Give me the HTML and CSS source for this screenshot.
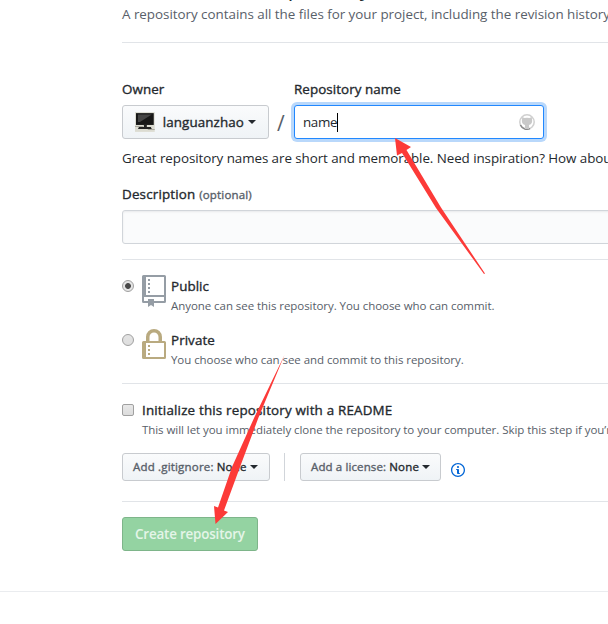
FILE: index.html
```
<!DOCTYPE html>
<html lang="en">
<head>
<meta charset="utf-8">
<title>Create a new repository</title>
<link rel="stylesheet" href="styles.css">
</head>
<body>
<main class="page">
  <header class="intro">
    <h1>Create a new repository</h1>
    <p>A repository contains all the files for your project, including the revision history.</p>
  </header>

  <section class="naming">
    <div class="name-row">
      <div class="field">
        <label class="tight">Owner</label>
        <button class="btn owner">
          <svg class="avatar" viewBox="0 0 20 20"><rect width="20" height="20" fill="#dcdcd2"/><path d="M1 1h18v12H1z" fill="#171717"/><path d="M3 2.5h14L5 10H3z" fill="#454545"/><path d="M9 13h3v2H9zM4 15h12l1 2H3z" fill="#222"/><path d="M0 14h8v1H0zM13 17h7v1h-7z" fill="#aaa99f"/></svg>
          <span>languanzhao</span><i class="caret"></i>
        </button>
      </div>
      <span class="slash">/</span>
      <div class="field">
        <label class="tight">Repository name</label>
        <div class="input focused"><span>name</span><i class="cursor"></i>
          <svg class="loader" viewBox="0 0 16 16"><circle cx="8" cy="8" r="7.2" fill="none" stroke="#d0d0d0" stroke-width="1.5"/><path d="M1.400 11A7.200 7.200 0 0 0 11 14.500" fill="none" stroke="#888" stroke-width="1.5"/><path d="M3.300 3.100l2.200 1q2.500-.6 5 0l2.200-1 .3 2.200q1 4.600-3 5.700l.2 4.100H5.800l.2-4.100q-4-1.100-3-5.700z" fill="#c9c9c9"/></svg>
        </div>
      </div>
    </div>
    <p class="hint">Great repository names are short and memorable. Need inspiration? How about</p>
    <label>Description <small>(optional)</small></label>
    <div class="input description"></div>
  </section>

  <section class="visibility">
    <div class="choice">
      <i class="radio checked"></i>
      <svg class="icon" viewBox="0 0 24 32" fill="#959da5"><path fill-rule="evenodd" d="M1.500 0h21A1.500 1.500 0 0 1 24 1.500v25a1.500 1.500 0 0 1-1.500 1.500H12v4l-3-2-3 2v-4H1.500A1.500 1.500 0 0 1 0 26.500v-25A1.500 1.500 0 0 1 1.500 0zM4 2v18h18V2zM2 22v4h4v-2h6v2h10v-4z"/><path d="M6 4h2v2H6zM6 8h2v2H6zM6 12h2v2H6zM6 16h2v2H6z"/></svg>
      <div class="copy"><b class="tight">Public</b><p>Anyone can see this repository. You choose who can commit.</p></div>
    </div>
    <div class="choice">
      <i class="radio"></i>
      <svg class="icon" viewBox="0 0 24 32" fill="#b9aa80"><path fill-rule="evenodd" d="M1.500 12H4V8a8 8 0 0 1 16 0v4h2.500a1.500 1.500 0 0 1 1.500 1.500v15a1.500 1.500 0 0 1-1.500 1.500h-21A1.500 1.500 0 0 1 0 28.500v-15A1.500 1.500 0 0 1 1.500 12zM7.500 12h9V8a4.500 4.500 0 0 0-9 0zM4 14v14h18V14z"/><path d="M6 16h2v2H6zM6 20h2v2H6zM6 24h2v2H6z"/></svg>
      <div class="copy"><b class="tight">Private</b><p>You choose who can see and commit to this repository.</p></div>
    </div>
  </section>

  <section class="initialize">
    <div class="choice">
      <i class="checkbox"></i>
      <div class="copy"><b>Initialize this repository with a README</b><p>This will let you immediately clone the repository to your computer. Skip this step if you’re</p></div>
    </div>
    <div class="menus">
      <button class="btn small ignore"><span>Add .gitignore: <b>None</b></span><i class="caret"></i></button>
      <i class="divider"></i>
      <button class="btn small license"><span>Add a license: <b>None</b></span><i class="caret"></i></button>
      <svg class="info" viewBox="0 0 14 16"><path fill="#0366d6" fill-rule="evenodd" d="M6.300 5.690a.942.942 0 0 1-.28-.7c0-.28.09-.52.28-.7.190-.18.420-.28.7-.28.280 0 .520.090.7.280.180.190.280.420.280.7 0 .280-.09.520-.28.7a1 1 0 0 1-.7.300c-.28 0-.52-.11-.7-.300zM8 7.990c-.02-.25-.11-.48-.31-.69-.2-.19-.42-.3-.69-.31H6c-.27.020-.48.130-.69.310-.2.200-.3.440-.31.690h1v3c.020.270.110.500.310.690.200.200.420.310.690.310h1c.270 0 .480-.11.690-.31.200-.19.300-.42.310-.69H8V7.980v.010zM7 2.300c-3.140 0-5.700 2.540-5.700 5.680 0 3.140 2.560 5.700 5.700 5.700s5.700-2.550 5.700-5.700c0-3.150-2.560-5.690-5.700-5.690v.010zM7 .980c3.860 0 7 3.140 7 7s-3.140 7-7 7-7-3.120-7-7 3.140-7 7-7z"/></svg>
    </div>
  </section>

  <button class="btn create"><span>Create repository</span></button>
</main>
<footer class="footer"></footer>
<svg class="arrows" viewBox="0 0 608 624" fill="#fc3a38"><path d="M395 138l16 9-4.500 3L441 207.500l44 66-1 .5-48-66-34-55-5 2.500z"/><path d="M284.500 355L258.500 417.500 240 467 224 510.500l4 1.500-12.500 12L214 506l4 1.500L232 467l22.500-50z"/></svg>
</body>
</html>
```
FILE: styles.css
```
* { box-sizing: border-box; }
body {
  margin: 0;
  height: 624px;
  overflow: hidden;
  position: relative;
  background: #fff;
  color: #24292e;
  font: 13.4px/20px "Open Sans", "Noto Sans", sans-serif;
}
h1, p { margin: 0; white-space: nowrap; }
b, label, .btn { font-weight: 400; letter-spacing: .18px; -webkit-text-stroke: .35px; }
label { display: block; white-space: nowrap; height: 20px; }
.tight { letter-spacing: .07px; }
.page { width: 490px; margin-left: 118px; padding-left: 4px; overflow: hidden; }
.intro { height: 43px; border-bottom: 1px solid #e1e4e8; color: #586069; padding-top: 4px; letter-spacing: -.025px; }
h1 { font-size: 22px; font-weight: 400; line-height: 30px; margin-top: -32px; padding-bottom: 2px; letter-spacing: -.1px; word-spacing: 2px; color: #24292e; }
.naming { height: 217px; padding-top: 36px; border-bottom: 1px solid #e1e4e8; }
.name-row { display: flex; }
.field label { margin-bottom: 6px; }
.btn {
  display: flex;
  align-items: center;
  border: 1px solid #c8cbcf;
  border-radius: 3px;
  background: linear-gradient(#fafbfc, #eff3f6);
  color: #24292e;
  font-family: "Open Sans", "Noto Sans", sans-serif;
  font-size: 13.4px;
  line-height: 20px;
  white-space: nowrap;
  padding: 0 12px;
}
.owner { width: 147px; height: 34px; letter-spacing: .1px; }
.avatar { width: 20px; height: 20px; margin-right: 8px; }
.caret { border: 4px solid transparent; border-top-color: currentColor; border-bottom: 0; margin-left: 4px; }
.slash { width: 25px; padding: 32px 0 0 8px; font-size: 21px; line-height: 24px; color: #586069; }
.input { height: 34px; border: 1px solid #d1d5da; border-radius: 3px; background: #fafbfc; box-shadow: inset 0 1px 2px rgba(27,31,35,.075); }
.focused { width: 250px; display: flex; align-items: center; padding: 0 8px; background: #fff; border-color: #2188ff; box-shadow: 0 0 0 3px #b9d8fb; letter-spacing: -.35px; }
.cursor { width: 1px; height: 19px; background: #000; }
.loader { width: 16px; height: 16px; margin-left: auto; }
.hint { margin: 9px 0 16px; letter-spacing: -.075px; }
label + .description { margin-top: 6px; }
small { font-size: 11.500px; color: #586069; }
.description { width: 700px; }
.visibility { height: 124px; padding-top: 16px; border-bottom: 1px solid #e1e4e8; }
.choice { display: flex; height: 54px; }
.radio { flex: none; width: 12px; height: 12px; border: 1px solid #a0a0a0; border-radius: 50%; margin: 4px 8px 0 0; background: linear-gradient(#e4e4e4, #dedede); }
.checked { background: radial-gradient(circle, #484848 0 2.500px, #e4e4e4 3.300px); }
.icon { flex: none; width: 24px; height: 32px; margin: -1px 5px 0 0; }
.copy b { display: block; height: 20px; white-space: nowrap; }
.copy p { font-size: 11.500px; line-height: 20px; color: #586069; letter-spacing: -.055px; }
.initialize { height: 118px; padding-top: 16px; border-bottom: 1px solid #e1e4e8; }
.initialize .choice { height: 53px; }
.checkbox { flex: none; width: 12px; height: 12px; border: 1px solid #a0a0a0; border-radius: 2px; margin: 4px 8px 0 0; background: linear-gradient(#e8e8e8, #dcdcdc); }
.menus { display: flex; align-items: flex-start; }
.small { height: 28px; padding: 0 10px; font-size: 11.500px; color: #586069; }
.small b, .small .caret { color: #24292e; }
.small .caret { margin-left: 3px; }
.ignore { width: 148px; }
.license { width: 141px; letter-spacing: .12px; }
.divider { width: 1px; height: 28px; margin: 0 15px 0 14px; background: #d1d5da; }
.info { width: 14px; height: 16px; margin: 9px 0 0 10px; }
.create { width: 136px; height: 34px; margin-top: 15px; background: #94d3a2; border-color: #7eb58a; color: #e4f5e8; font-weight: 600; letter-spacing: -.18px; -webkit-text-stroke: 0; }
.footer { margin-top: 40px; border-top: 1px solid #eaecef; }
.arrows { position: absolute; left: 0; top: 0; width: 608px; height: 624px; }
```
